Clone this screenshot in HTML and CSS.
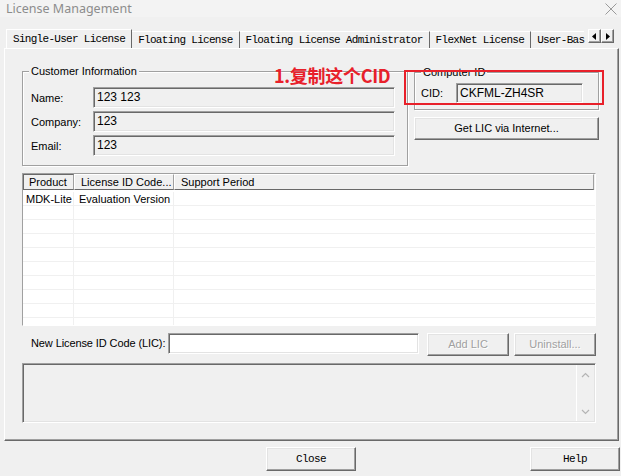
FILE: index.html
```html
<!DOCTYPE html>
<html lang="en">
<head>
    <meta charset="UTF-8">
    <title>License Management</title>
    <link rel="stylesheet" href="styles.css">
</head>
<body>
<div class="titlebar">
    <span class="title">License Management</span>
    <svg class="close-x" width="12" height="12" viewBox="0 0 12 12"><path d="M0.5 0.5 L11.5 11.5 M11.5 0.5 L0.5 11.5" stroke="#9a9a9a" stroke-width="1" fill="none"/></svg>
</div>

<div class="tabbar">
    <ul class="tabs">
        <li class="on">Single-User License</li>
        <li>Floating License</li>
        <li>Floating License Administrator</li>
        <li>FlexNet License</li>
        <li>User-Bas</li>
    </ul>
    <div class="tab-arrows">
        <span class="arrow"><svg width="5" height="7" viewBox="0 0 5 7"><path d="M4 0 L0 3.5 L4 7 Z" fill="#000"/></svg></span>
        <span class="arrow"><svg width="5" height="7" viewBox="0 0 5 7"><path d="M1 0 L5 3.5 L1 7 Z" fill="#000"/></svg></span>
    </div>
</div>

<div class="panel">
    <div class="top">
        <div class="group customer">
            <div class="group-title">Customer Information</div>
            <div class="form">
                <label>Name:</label><div class="field">123 123</div>
                <label>Company:</label><div class="field">123</div>
                <label>Email:</label><div class="field">123</div>
            </div>
        </div>
        <div class="side">
            <div class="group computer">
                <div class="group-title">Computer ID</div>
                <div class="cid-row">
                    <label>CID:</label><div class="field cid">CKFML-ZH4SR</div>
                </div>
            </div>
            <div class="btn wide">Get LIC via Internet...</div>
        </div>
    </div>

    <div class="list">
        <div class="list-head">
            <div class="col c1">Product</div>
            <div class="col c2">License ID Code...</div>
            <div class="col c3">Support Period</div>
        </div>
        <div class="rows">
            <div class="row"><div class="c1">MDK-Lite</div><div class="c2">Evaluation Version</div><div class="c3"></div></div>
            <div class="row"><div class="c1"></div><div class="c2"></div><div class="c3"></div></div>
            <div class="row"><div class="c1"></div><div class="c2"></div><div class="c3"></div></div>
            <div class="row"><div class="c1"></div><div class="c2"></div><div class="c3"></div></div>
            <div class="row"><div class="c1"></div><div class="c2"></div><div class="c3"></div></div>
            <div class="row"><div class="c1"></div><div class="c2"></div><div class="c3"></div></div>
            <div class="row"><div class="c1"></div><div class="c2"></div><div class="c3"></div></div>
            <div class="row"><div class="c1"></div><div class="c2"></div><div class="c3"></div></div>
            <div class="row"><div class="c1"></div><div class="c2"></div><div class="c3"></div></div>
            <div class="row"><div class="c1"></div><div class="c2"></div><div class="c3"></div></div>
        </div>
    </div>

    <div class="lic-row">
        <label>New License ID Code (LIC):</label>
        <div class="field white"></div>
        <div class="btn off add">Add LIC</div>
        <div class="btn off uninstall">Uninstall...</div>
    </div>

    <div class="msg">
        <div class="msg-text"></div>
        <div class="vscroll">
            <svg width="9" height="6" viewBox="0 0 9 6"><path d="M1 5 L4.5 1.5 L8 5" stroke="#b4b4b4" stroke-width="1.2" fill="none"/></svg>
            <svg width="9" height="6" viewBox="0 0 9 6"><path d="M1 1 L4.5 4.5 L8 1" stroke="#b4b4b4" stroke-width="1.2" fill="none"/></svg>
        </div>
    </div>
</div>

<div class="footer">
    <div class="btn mono">Close</div>
    <div class="btn mono help">Help</div>
</div>

<!-- 标注 -->
<div class="note">1.复制这个CID</div>
<div class="note-box"></div>
</body>
</html>
```

FILE: styles.css
```css
*{
    margin: 0;
    padding: 0;
    list-style: none;
    box-sizing: border-box;
}
html,body{
    width: 621px;
    height: 476px;
    overflow: hidden;
}
body{
    position: relative;
    background: #f0f0f0;
    font-family: "Liberation Sans", Arial, sans-serif;
    font-size: 11px;
    color: #000;
}
.titlebar{
    height: 17px;
    display: flex;
    align-items: center;
    padding: 0 4px 0 6px;
    background: #f3f3f3;
}
.title{
    font-family: "Noto Sans", "Noto Sans CJK SC", sans-serif;
    font-size: 12.5px;
    color: #8c8c8c;
    flex: 1;
}
.tabbar{
    display: flex;
    height: 19px;
    margin-top: 12px;
    padding-left: 6px;
    align-items: flex-start;
}
.tabs{
    display: flex;
    width: 580px;
    overflow: hidden;
    height: 19px;
    align-items: flex-end;
    font-family: "Liberation Mono", monospace;
    font-size: 11px;
    letter-spacing: -0.7px;
}
.tabs li{
    flex: none;
    height: 17px;
    line-height: 16px;
    padding: 0 6px;
    border-top: 1px solid #fff;
    border-right: 1px solid #696969;
    white-space: nowrap;
}
.tabs li.on{
    height: 19px;
    line-height: 18px;
    border-left: 1px solid #fff;
    padding: 0 6px;
    background: #f0f0f0;
}
.tabs li:last-child{
    border-right: 0;
    padding-right: 0;
}
.tab-arrows{
    display: flex;
    margin-left: 2px;
}
.arrow{
    width: 13px;
    height: 14px;
    display: flex;
    align-items: center;
    justify-content: center;
    border: 1px solid;
    border-color: #fff #696969 #696969 #fff;
    box-shadow: inset -1px -1px #a0a0a0;
}
.panel{
    width: 615px;
    height: 393px;
    margin-left: 4px;
    border: 1px solid;
    border-color: #fff #696969 #696969 #fff;
    box-shadow: inset -1px -1px #a0a0a0;
    padding: 22px 0 0 17px;
}
.top{
    display: flex;
    align-items: flex-start;
}
.group{
    border: 1px solid #a0a0a0;
    box-shadow: inset 1px 1px #fff, 1px 1px #fff;
}
.group-title{
    width: fit-content;
    margin: -8px 0 0 6px;
    padding: 0 2px;
    line-height: 14px;
    background: #f0f0f0;
    white-space: nowrap;
}
.customer{
    width: 386px;
    height: 95px;
}
.form{
    display: grid;
    grid-template-columns: 62px 302px;
    grid-auto-rows: 21px;
    row-gap: 3px;
    margin-top: 9px;
    padding-left: 8px;
    align-items: center;
}
.field{
    height: 21px;
    line-height: 17px;
    padding: 1px 3px;
    border: 1px solid;
    border-color: #a0a0a0 #fff #fff #a0a0a0;
    box-shadow: inset 1px 1px #696969, inset -1px -1px #e3e3e3;
    background: #f0f0f0;
    font-size: 12px;
}
.field.white{
    background: #fff;
}
.side{
    width: 185px;
    margin-left: 6px;
}
.computer{
    height: 38px;
    margin-top: 1px;
}
.cid-row{
    display: flex;
    align-items: center;
    margin-top: 4px;
    padding-left: 6px;
}
.cid-row label{
    width: 35px;
}
.field.cid{
    width: 127px;
    height: 20px;
    line-height: 16px;
}
.btn{
    height: 23px;
    line-height: 21px;
    text-align: center;
    white-space: nowrap;
    border: 1px solid;
    border-color: #fff #696969 #696969 #fff;
    box-shadow: inset -1px -1px #a0a0a0, inset 1px 1px #e3e3e3;
    background: #f0f0f0;
}
.btn.wide{
    margin-top: 7px;
}
.btn.off{
    color: #a0a0a0;
    text-shadow: 1px 1px #fff;
}
.list{
    width: 574px;
    height: 153px;
    margin-top: 7px;
    border: 1px solid;
    border-color: #a0a0a0 #fff #fff #a0a0a0;
    background: #fff;
    overflow: hidden;
}
.list-head{
    display: flex;
    height: 16px;
    background: #f0f0f0;
}
.list-head .col{
    line-height: 14px;
    padding-left: 6px;
    white-space: nowrap;
    overflow: hidden;
    border: 1px solid;
    border-color: #fff #a0a0a0 #696969 #fff;
}
.c1{
    width: 51px;
}
.c2{
    width: 100px;
}
.c3{
    flex: 1;
}
.list-head .c1{
    padding-left: 5px;
    border-left-color: #696969;
    border-top-color: #696969;
}
.list-head .c3{
    margin-right: 1px;
}
.rows{
    padding-top: 2px;
}
.row{
    display: flex;
    height: 14px;
    border-bottom: 1px solid #f0f0f0;
}
.row div{
    line-height: 14px;
    padding-left: 4px;
    white-space: nowrap;
    overflow: hidden;
}
.row .c1,
.row .c2{
    border-right: 1px solid #f0f0f0;
}
.row .c1{
    padding-left: 3px;
}
.row .c2{
    padding-left: 5px;
}
.lic-row{
    display: grid;
    grid-template-columns: 146px 251px 90px 87px;
    margin-top: 7px;
    width: 574px;
    align-items: start;
}
.lic-row label{
    line-height: 21px;
    padding-left: 9px;
    white-space: nowrap;
    letter-spacing: -0.1px;
}
.lic-row .field{
    height: 21px;
}
.lic-row .add{
    margin-left: 8px;
}
.lic-row .uninstall{
    margin-left: 5px;
}
.msg{
    display: flex;
    width: 574px;
    height: 60px;
    margin-top: 7px;
    border: 1px solid;
    border-color: #a0a0a0 #fff #fff #a0a0a0;
    box-shadow: inset 1px 1px #696969, inset -1px -1px #e3e3e3;
}
.msg-text{
    flex: 1;
}
.vscroll{
    width: 18px;
    display: flex;
    flex-direction: column;
    align-items: center;
    justify-content: space-between;
    padding: 7px 0 6px;
    border-left: 1px solid #fff;
    margin: 1px 1px 1px 0;
}
.footer{
    display: flex;
    margin-top: 6px;
    padding: 0 1px 0 266px;
}
.btn.mono{
    width: 90px;
    height: 24px;
    line-height: 22px;
    font-family: "Liberation Mono", monospace;
    font-size: 11px;
    letter-spacing: -0.6px;
}
.btn.help{
    margin-left: auto;
}
.note{
    position: absolute;
    left: 274px;
    top: 62px;
    font-family: "Noto Sans CJK SC", "Noto Sans", sans-serif;
    font-size: 18px;
    font-weight: bold;
    line-height: 26px;
    color: #e8202a;
    letter-spacing: -0.3px;
}
.note-box{
    position: absolute;
    left: 404px;
    top: 70px;
    width: 200px;
    height: 35px;
    border: 2px solid #e8202a;
}
```
